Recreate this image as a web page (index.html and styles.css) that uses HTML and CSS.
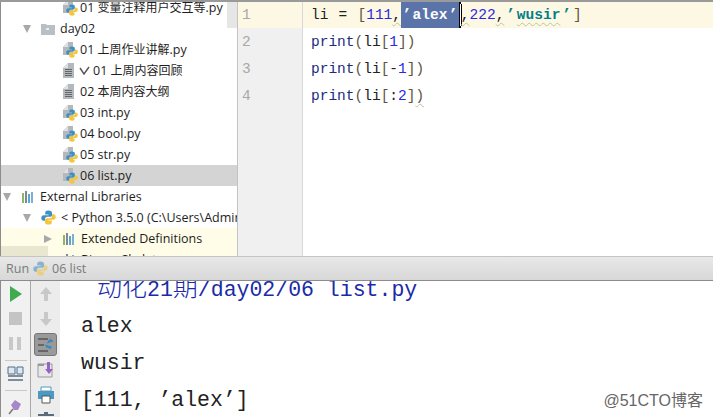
FILE: index.html
```html
<!DOCTYPE html>
<html lang="zh">
<head>
<meta charset="utf-8">
<title>06 list</title>
<link rel="stylesheet" href="styles.css">
</head>
<body>
<svg class="defs" width="0" height="0">
  <symbol id="py" viewBox="0 0 16 16">
    <path d="M7.800 .5C5 .5 4.500 1.700 4.500 3v1.800h3.600v.7H2.800C1.300 5.500.3 6.800.3 8.500s1 3 2.500 3h1.400V9.600c0-1.400 1.100-2.400 2.500-2.400h3.100c1.100 0 2-.9 2-2V3C11.800 1.500 10.500.5 7.800.5z" fill="#3f8fc4"/>
    <path d="M8.200 15.500c2.800 0 3.300-1.200 3.300-2.500v-1.800H7.900v-.7h5.300c1.500 0 2.500-1.300 2.500-3s-1-3-2.500-3h-1.400v1.900c0 1.400-1.100 2.400-2.500 2.400H6.200c-1.100 0-2 .9-2 2V13c0 1.500 1.300 2.500 4 2.500z" fill="#f5c53a"/>
  </symbol>
  <symbol id="pyfile" viewBox="0 0 16 16">
    <path d="M0 5 5 0h5v13H0z" fill="#b3b8bc"/>
    <path d="M0 5h5V0z" fill="#dfe1e3"/>
    <use href="#py" x="3" y="4" width="12" height="12"/>
  </symbol>
  <symbol id="txtfile" viewBox="0 0 12 16">
    <path d="M0 5 5 0h6v15H0z" fill="#b3b8bc"/>
    <path d="M0 5h5V0z" fill="#dfe1e3"/>
    <path d="M2 6.500h7M2 8.500h7M2 10.500h7M2 12.500h7" stroke="#666" stroke-width="1"/>
  </symbol>
  <symbol id="lib" viewBox="0 0 14 14">
    <path d="M1 3h2v10H1z" fill="#8fb56a"/>
    <path d="M4 1h2v12H4z" fill="#7d8a96"/>
    <path d="M7 4h2v9H7z" fill="#5ea5d4"/>
    <path d="M10 2h2v11h-2z" fill="#7ab0d8"/>
  </symbol>
</svg>

<main class="ide">
  <section class="top">
    <nav class="tree">
      <div class="scrollthumb"></div>
      <div class="row first in-3"><svg class="ico"><use href="#pyfile"/></svg><span>01 <span class="zh">变量注释用户交互等</span>.py</span></div>
      <div class="row in-2"><i class="tri down"></i><svg class="folder" viewBox="0 0 14 12"><path d="M0 1h5l1 1h8v10H0z" fill="#b8c0c6"/><rect x="5" y="5" width="3" height="2" fill="#e8ecee"/></svg><span>day02</span></div>
      <div class="row in-3"><svg class="ico"><use href="#pyfile"/></svg><span>01 <span class="zh">上周作业讲解</span>.py</span></div>
      <div class="row in-3"><svg class="ico txt"><use href="#txtfile"/></svg><svg class="check" viewBox="0 0 11 10"><path d="M1 2l4 6 5-7" fill="none" stroke="#555" stroke-width="1.400"/></svg><span>01 <span class="zh">上周内容回顾</span></span></div>
      <div class="row in-3"><svg class="ico txt"><use href="#txtfile"/></svg><span>02 <span class="zh">本周内容大纲</span></span></div>
      <div class="row in-3"><svg class="ico"><use href="#pyfile"/></svg><span>03 int.py</span></div>
      <div class="row in-3"><svg class="ico"><use href="#pyfile"/></svg><span>04 bool.py</span></div>
      <div class="row in-3"><svg class="ico"><use href="#pyfile"/></svg><span>05 str.py</span></div>
      <div class="row in-3 selected"><svg class="ico"><use href="#pyfile"/></svg><span>06 list.py</span></div>
      <div class="row in-1"><i class="tri down"></i><svg class="libico"><use href="#lib"/></svg><span>External Libraries</span></div>
      <div class="row in-2"><i class="tri down"></i><svg class="pyico"><use href="#py"/></svg><span>&lt; Python 3.5.0 (C:\Users\Administrator</span></div>
      <div class="row in-2b hint"><i class="tri right"></i><svg class="libico"><use href="#lib"/></svg><span>Extended Definitions</span></div>
      <div class="row in-2b hint"><i class="tri right"></i><svg class="libico"><use href="#lib"/></svg><span>Binary Skeletons</span></div>
      <div class="hintbar"></div>
    </nav>
    <div class="editor">
      <div class="gutter">
        <div class="num current">1</div>
        <div class="num">2</div>
        <div class="num">3</div>
        <div class="num">4</div>
      </div>
      <div class="code">
        <div class="line current first-line">li = <span class="br">[</span><span class="n">111</span><span class="wavy">,</span><span class="sel"><span class="q">’</span>alex<span class="q">’</span></span><span class="caret"></span><span class="ibeam"></span><span class="wavy">,</span><span class="n">222</span><span class="wavy">,</span><span class="str wavy"><span class="q">’</span>wusir<span class="q">’</span></span><span class="br">]</span></div>
        <div class="line"><span class="fn">print</span><span class="br">(</span>li<span class="br">[</span><span class="n">1</span><span class="br">])</span></div>
        <div class="line"><span class="fn">print</span><span class="br">(</span>li<span class="br">[</span>-<span class="n">1</span><span class="br">])</span></div>
        <div class="line"><span class="fn">print</span><span class="br">(</span>li<span class="br">[</span>:<span class="n">2</span><span class="br">]</span><span class="br wavy">)</span></div>
      </div>
    </div>
  </section>
  <header class="runbar">
    <span>Run</span><svg class="runpy"><use href="#py"/></svg><span>06 list</span>
  </header>
  <section class="bottom">
    <div class="tools">
      <svg class="tool" viewBox="0 0 18 18"><path d="M3 1l12 8-12 8z" fill="#3dab4e"/></svg>
      <svg class="tool" viewBox="0 0 18 18"><rect x="2" y="2" width="13" height="13" fill="#c4c4c4"/></svg>
      <svg class="tool" viewBox="0 0 18 18"><path d="M2 2h4v13H2zM10 2h4v13h-4z" fill="#c8c8c8"/></svg>
      <hr class="sep tight">
      <svg class="tool" viewBox="0 0 18 18"><path d="M1 2h7v7H1zM10 2h6v7h-6z" fill="#dfe8f0" stroke="#4a6e8c"/><path d="M1 11h15M1 15h15" stroke="#5a6c7c" stroke-width="1.500"/></svg>
      <hr class="sep">
      <svg class="tool" viewBox="0 0 18 18"><path d="M8 2l6 4-3 6H7L4 7z" fill="#a787c6"/><path d="M6 11l-4 5" stroke="#777" stroke-width="1.500"/></svg>
    </div>
    <div class="tools second">
      <svg class="tool" viewBox="0 0 18 18"><path d="M9 2l6 7h-4v7H7V9H3z" fill="#c8c8c8"/></svg>
      <svg class="tool" viewBox="0 0 18 18"><path d="M9 16l6-7h-4V2H7v7H3z" fill="#c8c8c8"/></svg>
      <span class="toggle"><svg class="tool" viewBox="0 0 18 18"><path d="M1 3h10M1 9h6M1 15h10" stroke="#555" stroke-width="1.300"/><path d="M10 7l5-2-2-2M16 5h-5M8 9l6 2-2 2M14 11H9" stroke="#3d87bd" stroke-width="1.300" fill="none"/></svg></span>
      <svg class="tool" viewBox="0 0 18 18"><path d="M1 3h14v13H1z" fill="#e8e8e8" stroke="#999"/><path d="M1 3h6v2H1z" fill="#999"/><path d="M10 1h3v7h3l-4 5-4-5h2z" fill="#9565c4"/></svg>
      <svg class="tool" viewBox="0 0 18 18"><path d="M4 1h10v4H4z" fill="#fff" stroke="#4c9ac4"/><path d="M1 5h16v8H1z" fill="#4c9ac4"/><path d="M5 10h8v7H5z" fill="#fff" stroke="#555"/></svg>
      <svg class="tool" viewBox="0 0 18 18"><path d="M7 1h4v2h6v2H1V3h6z" fill="#5a6c7c"/><path d="M3 7h12v11H3z" fill="#5a6c7c"/></svg>
    </div>
    <div class="output">
      <div class="out path"><span class="cjk">动化</span>21<span class="cjk">期</span>/day02/06 list.py</div>
      <div class="out">alex</div>
      <div class="out">wusir</div>
      <div class="out">[111, ’alex’]</div>
      <div class="watermark">@51CTO博客</div>
    </div>
  </section>
</main>
</body>
</html>
```
FILE: styles.css
```css
* { box-sizing: border-box; }
html, body { margin: 0; height: 100%; overflow: hidden; background: #fff; }
.defs { position: absolute; }
.ide { width: 713px; height: 417px; display: flex; flex-direction: column; overflow: hidden; }

.top { height: 256px; display: flex; border-top: 2px solid #9a9a9a; flex: none; overflow: hidden; }

.tree { position: relative; width: 238px; flex: none; border-left: 1px solid #8c8c8c; border-right: 1px solid #c4c4c4; overflow: hidden; font: 12.5px/21px "Open Sans", "Noto Sans CJK SC", sans-serif; color: #1e1e1e; }
.zh { font-size: 12px; }
.scrollthumb { position: absolute; right: 0; top: 0; width: 10px; height: 26px; background: #e6e6e6; }
.row { height: 21px; display: flex; align-items: center; white-space: nowrap; }
.row.first { margin-top: -5px; }
.in-1 { padding-left: 2px; }
.in-2 { padding-left: 22px; }
.in-2b { padding-left: 43px; }
.in-3 { padding-left: 62px; }
.selected { background: #d4d4d4; }
.hint { background: #fffde8; }
.hintbar { position: absolute; left: 0; top: 244px; width: 47px; height: 12px; background: #e9e7cf; }
.ico { width: 16px; height: 16px; margin-right: 1px; flex: none; }
.ico.txt { width: 12px; margin-right: 5px; }
.check { width: 11px; height: 10px; margin: 0 3px 0 -1px; flex: none; }
.folder { width: 14px; height: 12px; margin-right: 5px; flex: none; }
.libico { width: 14px; height: 14px; margin-right: 5px; flex: none; }
.pyico { width: 15px; height: 15px; margin-right: 5px; flex: none; }
.tri { width: 0; height: 0; flex: none; }
.tri.down { border: 4.5px solid transparent; border-top: 8px solid #a8a8a8; border-bottom: 0; margin-right: 10px; }
.tri.right { border: 4px solid transparent; border-left: 8px solid #a8a8a8; border-right: 0; margin-right: 10px; }

.editor { flex: 1; display: flex; min-width: 0; }
.gutter { width: 65px; flex: none; background: #f0f0f0; border-right: 1px solid #d8d8d8; font: 14.5px/27px "Liberation Mono", monospace; color: #a8a8a8; }
.num { height: 27px; padding-left: 4px; }
.num.current { height: 26px; margin-bottom: 1px; background: #fdf8e4; }
.code { flex: 1; font: 14.5px/27px "Liberation Mono", monospace; color: #222; }
.line { height: 27px; padding-left: 8px; white-space: pre; }
.line.current { height: 26px; margin-bottom: 1px; background: #fdf8e4; }
.first-line { word-spacing: 1.5px; }
.br { color: #5f5540; }
.n { color: #2a2adf; }
.fn { color: #1c2a80; }
.str { color: #007f87; font-weight: bold; }
.str .q { width: 12.5px; }
.sel { background: #5a73a8; color: #fff; display: inline-block; height: 26px; font-weight: bold; }
.q { display: inline-block; width: 11.5px; text-align: center; }
.caret { display: inline-block; width: 2px; height: 26px; background: #000; vertical-align: top; }
.ibeam { display: inline-block; width: 1px; height: 22px; margin: 2px -1px 0 0; background: #000; box-shadow: -1px 0 #fff; vertical-align: top; }
.wavy { text-decoration: underline wavy #b8c8a0 1px; text-underline-offset: 3px; }

.runbar { height: 25px; flex: none; display: flex; align-items: center; gap: 4px; padding-left: 6px; border-top: 1px solid #c4c4c4; border-bottom: 1px solid #8c8c8c; background: linear-gradient(#e8e8e8, #d8d8d8); font: 12.5px "Open Sans", sans-serif; color: #7a7a7a; }
.runpy { width: 15px; height: 15px; opacity: .55; }

.bottom { flex: 1; display: flex; min-height: 0; overflow: hidden; }
.tools { width: 31px; flex: none; display: flex; flex-direction: column; align-items: center; padding-top: 4px; gap: 7px; background: #f1f1f1; border-right: 1px solid #a8a8a8; border-left: 1px solid #8c8c8c; overflow: hidden; }
.tools.second { width: 29px; border: 0; background: #ececec; }
.tool { width: 18px; height: 18px; flex: none; }
.sep { width: 22px; height: 1px; margin: 0; border: 0; background: #c8c8c8; flex: none; }
.sep.tight { margin-bottom: -3px; }
.toggle { width: 23px; height: 23px; display: flex; align-items: center; justify-content: center; margin: -2px 0; background: #9a9a9a; border-radius: 3px; border: 1px solid #777; flex: none; }

.output { position: relative; flex: 1; min-width: 0; padding-left: 21px; font: 21.5px/37px "Liberation Mono", monospace; color: #222; overflow: hidden; }
.out { height: 37px; white-space: pre; }
.out.path { height: 36px; margin-top: -9px; line-height: 27px; padding-left: 16px; color: #1a2aa8; }
.cjk { font-family: "Noto Sans CJK SC", sans-serif; font-size: 25px; font-weight: 300; line-height: 27px; }
.watermark { position: absolute; right: 10px; bottom: 6px; font: 16px/20px "Liberation Sans", "Noto Sans CJK SC", sans-serif; color: #666; }
```
